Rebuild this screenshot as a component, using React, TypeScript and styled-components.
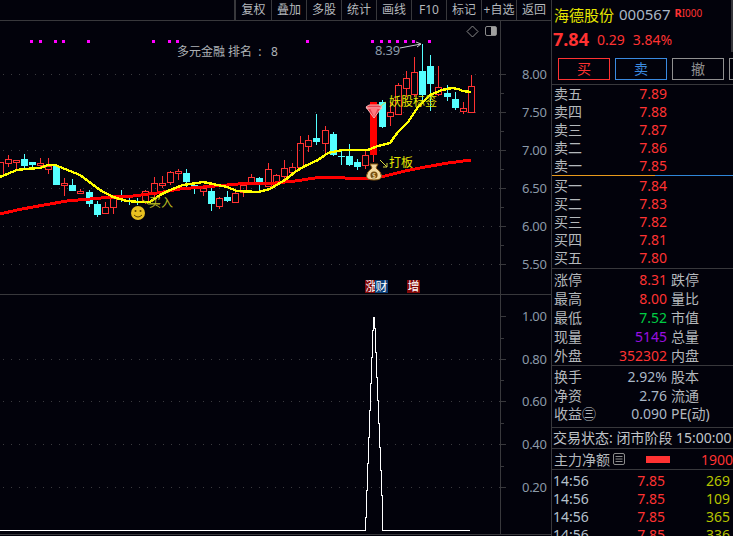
import React from "react";
import styled, { createGlobalStyle } from "styled-components";

const Global = createGlobalStyle`
  html, body { margin: 0; padding: 0; background: #02020b; }
  body { font-family: "Noto Sans", "Noto Sans CJK SC", sans-serif; }
`;

const FONT = `"Noto Sans", "Noto Sans CJK SC", sans-serif`;
const RED = "#ff3232";
const CYAN = "#54ffff";
const LINE = "#38383c";
const LABEL = "#b4b8bc";
const NUM = "#a9b7c6";

const Page = styled.div`
  width: 733px;
  height: 536px;
  overflow: hidden;
  display: flex;
  background: #02020b;
  font-family: ${FONT};
`;
const LeftColumn = styled.div`
  width: 551px;
  height: 536px;
  flex: none;
  display: flex;
  flex-direction: column;
`;
const TopBar = styled.div`
  height: 20px;
  flex: none;
  display: flex;
  justify-content: flex-end;
  border-bottom: 1px solid ${LINE};
`;
const TopButton = styled.div<{ $first?: boolean }>`
  width: ${(p) => (p.$first ? 37 : 35)}px;
  box-sizing: border-box;
  border-left: ${(p) => (p.$first ? 2 : 1)}px solid ${LINE};
  color: ${LABEL};
  font-size: 12px;
  line-height: 19px;
  text-align: center;
  white-space: nowrap;
`;
const ChartPanel = styled.div<{ $height: number }>`
  position: relative;
  height: ${(p) => p.$height}px;
  flex: none;
  border-bottom: 1px solid ${LINE};
  svg { display: block; }
`;
const ChartLabel = styled.span<{ $x: number; $y: number; $color: string }>`
  position: absolute;
  left: ${(p) => p.$x}px;
  top: ${(p) => p.$y}px;
  color: ${(p) => p.$color};
  font-size: 12px;
  line-height: 16px;
  white-space: pre;
`;
const NumberLabel = styled(ChartLabel)`
  font-size: 13px;
  letter-spacing: -0.2px;
`;
const Badge = styled.span<{ $x: number; $blue?: boolean }>`
  position: absolute;
  left: ${(p) => p.$x}px;
  top: 259px;
  width: 13px;
  height: 13px;
  background: ${(p) => (p.$blue ? "#0b3f78" : "#820808")};
  color: #fff;
  font-size: 12px;
  line-height: 13px;
  text-align: center;
`;
const CornerIcons = styled.svg`
  position: absolute;
  left: 466px;
  top: 4px;
`;
const ListIcon = styled.svg`
  margin-left: 3px;
  flex: none;
`;

const RightPanel = styled.div`
  position: relative;
  flex: 1;
  min-width: 0;
  height: 536px;
  overflow: hidden;
  border-left: 1px solid ${LINE};
  white-space: nowrap;
`;
const ScrollEdge = styled.div`
  position: absolute;
  right: 0;
  top: 0;
  width: 2px;
  height: 52px;
  background: #35353a;
`;
const TitleRow = styled.div`
  height: 28px;
  padding-left: 2px;
  display: flex;
  align-items: center;
  gap: 5px;
`;
const StockName = styled.span`
  color: #e6e600;
  font-size: 15px;
`;
const StockCode = styled.span`
  color: ${NUM};
  font-size: 15px;
`;
const Rights = styled.span`
  color: ${RED};
  font-size: 10px;
  margin: -4px 0 0 -1px;
  b { font-size: 11px; }
`;
const PriceRow = styled.div`
  height: 24px;
  padding-left: 1px;
  display: flex;
  align-items: center;
  gap: 8px;
  color: ${RED};
  font-size: 14px;
  margin-top: -1px;
  margin-bottom: 1px;
`;
const BigPrice = styled.span`
  font-size: 18px;
  font-weight: 700;
`;
const ButtonRow = styled.div`
  height: 33px;
  box-sizing: border-box;
  padding: 6px 0 0 6px;
  display: flex;
  gap: 5px;
  border-bottom: 1px solid ${LINE};
`;
const TradeButton = styled.div<{ $color: string }>`
  width: 52px;
  height: 22px;
  flex: none;
  box-sizing: border-box;
  border: 1px solid ${(p) => p.$color};
  color: ${(p) => p.$color};
  font-size: 14px;
  line-height: 19px;
  text-align: center;
`;
const BookSection = styled.div`
  padding: 0 0 0 2px;
`;
const SplitLine = styled.div`
  height: 1px;
  margin-bottom: 1px;
  background: linear-gradient(to right, #e89a1c 0 103px, #2f86d8 103px);
`;
const Section = styled.div<{ $top?: number; $bottom?: number }>`
  border-bottom: 1px solid ${LINE};
  padding: ${(p) => p.$top ?? 0}px 0 ${(p) => p.$bottom ?? 0}px 2px;
`;
const QuoteRow = styled.div<{ $h: number }>`
  height: ${(p) => p.$h}px;
  display: grid;
  grid-template-columns: 30px 83px auto;
  align-items: center;
  font-size: 14px;
  line-height: ${(p) => p.$h}px;
  color: ${LABEL};
`;
const Value = styled.span<{ $color?: string }>`
  color: ${(p) => p.$color ?? NUM};
  text-align: right;
`;
const SideLabel = styled.span`
  margin-left: 4px;
`;
const StatusRow = styled.div`
  height: 20px;
  margin-left: -1px;
  font-size: 14px;
  line-height: 20px;
  color: #c0c4c8;
`;
const FlowRow = styled.div`
  height: 20px;
  display: flex;
  align-items: center;
  font-size: 14px;
  color: ${LABEL};
`;
const FlowBar = styled.div`
  width: 24px;
  height: 7px;
  margin-left: 21px;
  background: ${RED};
`;
const FlowValue = styled.span`
  margin-left: 31px;
  color: ${RED};
`;
const TickList = styled.div`
  padding: 2px 0 0 1px;
`;
const TickRow = styled.div`
  height: 18px;
  display: grid;
  grid-template-columns: 36px 76px 65px;
  align-items: center;
  font-size: 14px;
  line-height: 18px;
`;
const TickTime = styled.span`
  color: #b4c0cc;
`;
const TickPrice = styled.span`
  color: ${RED};
  text-align: right;
`;
const TickVolume = styled.span`
  color: #b6c400;
  text-align: right;
`;

type Candle = [number, number, number, number, number, 0 | 1];
// x, high, body top, body bottom, low, 1 = rising (red hollow) / 0 = falling (cyan)
const candles: Candle[] = [
  [0, 162, 162, 176, 176, 1], [8, 155, 159, 163, 167, 1], [16, 160, 160, 162, 169, 1],
  [24, 154, 159, 166, 168, 0], [32, 162, 162, 165, 168, 0], [40, 158, 163, 165, 167, 1],
  [48, 158, 166, 169, 174, 1], [56, 165, 166, 185, 185, 0], [64, 178, 183, 185, 196, 1],
  [72, 179, 185, 191, 191, 0], [80, 189, 191, 193, 194, 1], [89, 190, 192, 204, 207, 0],
  [97, 201, 204, 215, 217, 0], [105, 202, 207, 213, 214, 1], [113, 196, 198, 207, 214, 1],
  [121, 190, 197, 198, 202, 0], [129, 198, 200, 202, 205, 0], [137, 198, 201, 202, 205, 0],
  [145, 190, 191, 201, 204, 1], [154, 177, 183, 192, 197, 1], [162, 176, 183, 185, 188, 1],
  [170, 171, 172, 182, 185, 1], [178, 169, 171, 173, 180, 1], [186, 169, 173, 182, 187, 0],
  [194, 182, 185, 189, 194, 0], [203, 186, 188, 191, 196, 1], [211, 187, 191, 204, 211, 0],
  [219, 197, 198, 206, 209, 1], [227, 191, 197, 201, 202, 0], [235, 192, 193, 202, 203, 1],
  [243, 183, 185, 192, 197, 1], [251, 174, 177, 182, 184, 1], [259, 177, 178, 182, 191, 0],
  [268, 163, 169, 186, 187, 1], [276, 174, 175, 183, 185, 1], [284, 160, 168, 176, 180, 1],
  [292, 163, 167, 172, 175, 1], [300, 136, 143, 167, 169, 1], [308, 135, 140, 146, 152, 1],
  [316, 114, 138, 142, 145, 0], [325, 126, 130, 143, 153, 1], [333, 132, 134, 155, 156, 0],
  [341, 151, 156, 156, 165, 0], [349, 144, 156, 165, 166, 0], [357, 159, 162, 167, 170, 0],
  [365, 150, 155, 165, 169, 1], [382, 100, 102, 127, 128, 0], [390, 102, 112, 116, 126, 1],
  [398, 83, 85, 114, 115, 1], [406, 71, 78, 88, 97, 1], [414, 57, 72, 94, 97, 1],
  [422, 44, 71, 95, 103, 0], [430, 55, 66, 84, 111, 0], [438, 66, 87, 94, 96, 1],
  [447, 85, 93, 97, 101, 0], [455, 92, 99, 108, 110, 0], [463, 102, 108, 111, 114, 1],
  [471, 75, 86, 112, 112, 1],
];

const yellowLine =
  "0,177 7,174 17,170 25,169 40,168 48,165 55,165 65,169 80,175 88,181 100,190 113,197 127,201 140,202 150,202 160,195 170,190 183,185 197,183 203,182 213,184 227,187 237,191 258,192 270,189 280,183 285,180 295,172 305,166 318,160 328,153 342,150 355,150 368,150 378,146 390,143 398,132 408,122 418,107 430,95 442,90 452,88 458,89 463,91 471,92";
const redLine =
  "0,214 17,210 33,207 50,204 67,201 90,199 113,197 133,196 157,193 180,189 203,187 227,185 250,183 275,183 295,181 315,178 332,177 345,178 372,178 385,176 405,171 425,167 448,163 471,160";

const dots = [31, 40, 55, 63, 88, 153, 169, 177, 307, 372, 381, 389, 397, 405, 413, 429];
const grid = [74, 112, 150, 188, 226, 264];
const gridLabels = ["8.00", "7.50", "7.00", "6.50", "6.00", "5.50"];
const lowerGrid = [359, 401, 444, 487];
const lowerLabels = [
  [316, "1.00"], [359, "0.80"], [401, "0.60"], [444, "0.40"], [487, "0.20"],
] as const;
const peak =
  "0,530 365,530 365,517 366,517 366,490 367,490 367,463 368,463 368,437 369,437 369,410 370,410 370,383 371,383 371,357 372,357 372,330 373,330 373,317 374,317 374,328 375,328 375,352 376,352 376,377 377,377 377,400 378,400 378,423 379,423 379,447 380,447 380,470 381,470 381,495 382,495 382,530 470,530";

const AxisText = styled.text`
  fill: #8b99a8;
  font-family: ${FONT};
  font-size: 13px;
  letter-spacing: -0.3px;
`;

const Smiley = () => (
  <g>
    <circle cx={138} cy={213} r={7} fill="#e8c020" />
    <circle cx={135.5} cy={211} r={1} fill="#5a4000" />
    <circle cx={140.5} cy={211} r={1} fill="#5a4000" />
    <path d="M134 215 Q138 219 142 215" fill="none" stroke="#5a4000" strokeWidth={1} />
  </g>
);

const MoneyBag = () => (
  <g>
    <path d="M370 164 L378 164 L376 168 Q381.5 172 381.5 176 Q381.5 180 374 180 Q366.5 180 366.5 176 Q366.5 172 372 168 Z" fill="#f2d9a0" stroke="#8a5a10" strokeWidth={1} />
    <circle cx={374} cy={175} r={3.6} fill="#7a5010" />
    <text x={372} y={178} fontSize={7} fill="#f7e4b0" fontFamily={FONT}>$</text>
  </g>
);

const Gem = () => (
  <g>
    <path d="M366 107 L369 105 L379 105 L382 107 L374 118 Z" fill="#e8434f" stroke="#f6b0b0" strokeWidth={1} />
    <path d="M366 108 L382 108" stroke="#ffd0d0" strokeWidth={1} />
    <path d="M370 108 L374 117 L378 108" fill="#ff7a80" />
  </g>
);

const PriceChartDrawing = () => (
  <svg width={551} height={274} viewBox="0 21 551 274" shapeRendering="crispEdges">
    {grid.map((y) => (
      <line key={y} x1={3} x2={500} y1={y + 0.5} y2={y + 0.5} stroke="#3a3a3e" strokeDasharray="1 7" />
    ))}
    <line x1={500.5} x2={500.5} y1={21} y2={295} stroke={LINE} />
    {grid.map((y) => (
      <line key={y} x1={501} x2={506} y1={y + 0.5} y2={y + 0.5} stroke={LINE} />
    ))}
    {grid.slice(0, 5).map((y) => (
      <line key={y} x1={501} x2={504} y1={y + 19.5} y2={y + 19.5} stroke={LINE} />
    ))}
    {grid.map((y, i) => (
      <AxisText key={y} x={522} y={y + 5}>{gridLabels[i]}</AxisText>
    ))}
    {dots.map((x) => (
      <rect key={x} x={x - 1} y={40} width={3} height={3} fill="#ff00ff" />
    ))}
    {candles.map(([x, high, top, bottom, low, up]) => {
      const color = up ? RED : CYAN;
      return (
        <g key={x}>
          <line x1={x + 0.5} x2={x + 0.5} y1={high} y2={top} stroke={color} />
          <line x1={x + 0.5} x2={x + 0.5} y1={bottom} y2={low} stroke={color} />
          {up ? (
            <rect x={x - 2.5} y={top + 0.5} width={6} height={Math.max(bottom - top, 1)} fill="none" stroke={color} />
          ) : (
            <rect x={x - 3} y={top} width={7} height={Math.max(bottom - top, 1)} fill={color} />
          )}
        </g>
      );
    })}
    <rect x={370} y={102} width={7} height={53} fill="#ff0000" />
    <line x1={373.5} x2={373.5} y1={155} y2={162} stroke={RED} />
    <polyline points={redLine} fill="none" stroke="#ff0000" strokeWidth={3} />
    <polyline points={yellowLine} fill="none" stroke="#ffff00" strokeWidth={2.4} />
    <g shapeRendering="auto">
      <path d="M400 48 L421 44 M416 42 L421 44 L417 47" fill="none" stroke="#c8ccd0" strokeWidth={1} />
      <path d="M380 160 L387 167 M387 163 L387 167 L383 167" fill="none" stroke="#d8d840" strokeWidth={1} />
      <path d="M386 102 L378 108 M378 104 L378 108 L382 108" fill="none" stroke="#d8d840" strokeWidth={1} />
      <path d="M143 200 L148 204 L160 204" fill="none" stroke="#c8c820" strokeWidth={1} />
      <Smiley />
      <MoneyBag />
      <Gem />
    </g>
  </svg>
);

const IndicatorDrawing = () => (
  <svg width={551} height={239} viewBox="0 295 551 239" shapeRendering="crispEdges">
    {lowerGrid.map((y) => (
      <line key={y} x1={3} x2={500} y1={y + 0.5} y2={y + 0.5} stroke="#3a3a3e" strokeDasharray="1 7" />
    ))}
    <line x1={500.5} x2={500.5} y1={295} y2={536} stroke={LINE} />
    {lowerLabels.map(([y]) => (
      <line key={y} x1={501} x2={506} y1={y + 0.5} y2={y + 0.5} stroke={LINE} />
    ))}
    {[338, 380, 423, 466].map((y) => (
      <line key={y} x1={501} x2={504} y1={y + 0.5} y2={y + 0.5} stroke={LINE} />
    ))}
    {lowerLabels.map(([y, text]) => (
      <AxisText key={y} x={522} y={y + 5}>{text}</AxisText>
    ))}
    <polyline points={peak} fill="none" stroke="#ffffff" strokeWidth={1} />
  </svg>
);

const ask = [["卖五", "7.89"], ["卖四", "7.88"], ["卖三", "7.87"], ["卖二", "7.86"], ["卖一", "7.85"]];
const bid = [["买一", "7.84"], ["买二", "7.83"], ["买三", "7.82"], ["买四", "7.81"], ["买五", "7.80"]];
const stats: [string, string, string, string][] = [
  ["涨停", "8.31", RED, "跌停"],
  ["最高", "8.00", RED, "量比"],
  ["最低", "7.52", "#00cc44", "市值"],
  ["现量", "5145", "#9a10e0", "总量"],
  ["外盘", "352302", RED, "内盘"],
];
const ratios = [["换手", "2.92%", "股本"], ["净资", "2.76", "流通"], ["收益㊂", "0.090", "PE(动)"]];
const ticks = ["269", "109", "365", "336"];
const topButtons = ["复权", "叠加", "多股", "统计", "画线", "F10", "标记", "+自选", "返回"];

export default function App() {
  return (
    <Page>
      <Global />
      <LeftColumn>
        <TopBar>
          {topButtons.map((t, i) => (
            <TopButton key={t} $first={i === 0}>{t}</TopButton>
          ))}
        </TopBar>
        <ChartPanel $height={273}>
          <PriceChartDrawing />
          <CornerIcons width={34} height={13} viewBox="0 0 34 13">
            <path d="M6.5 1 L12 6.5 L6.5 12 L1 6.5 Z" fill="none" stroke="#8a8a8a" />
            <rect x={19.5} y={1.5} width={11} height={9} rx={1.5} fill="none" stroke="#8a8a8a" />
            <rect x={25} y={2} width={5} height={8} fill="#a0a0a0" />
          </CornerIcons>
          <ChartLabel $x={177} $y={23} $color="#aeb2b6">多元金融 排名  :   8</ChartLabel>
          <NumberLabel $x={375} $y={21} $color="#8b99a8">8.39</NumberLabel>
          <ChartLabel $x={389} $y={73} $color="#e6e600">妖股标签</ChartLabel>
          <ChartLabel $x={389} $y={134} $color="#e6e600">打板</ChartLabel>
          <ChartLabel $x={149} $y={174} $color="#b8b820">买入</ChartLabel>
          <Badge $x={365}>涨</Badge>
          <Badge $x={375} $blue>财</Badge>
          <Badge $x={407}>增</Badge>
        </ChartPanel>
        <ChartPanel $height={239}>
          <IndicatorDrawing />
        </ChartPanel>
      </LeftColumn>
      <RightPanel>
        <ScrollEdge />
        <TitleRow>
          <StockName>海德股份</StockName>
          <StockCode>000567</StockCode>
          <Rights><b>R</b>I000</Rights>
        </TitleRow>
        <PriceRow>
          <BigPrice>7.84</BigPrice>
          <span>0.29</span>
          <span>3.84%</span>
        </PriceRow>
        <ButtonRow>
          <TradeButton $color={RED}>买</TradeButton>
          <TradeButton $color="#3a8ae0">卖</TradeButton>
          <TradeButton $color="#909090">撤</TradeButton>
          <TradeButton $color="#909090" />
        </ButtonRow>
        <BookSection>
          {ask.map(([l, v]) => (
            <QuoteRow key={l} $h={18}>
              <span>{l}</span>
              <Value $color={RED}>{v}</Value>
            </QuoteRow>
          ))}
        </BookSection>
        <SplitLine />
        <Section $bottom={1}>
          {bid.map(([l, v]) => (
            <QuoteRow key={l} $h={18}>
              <span>{l}</span>
              <Value $color={RED}>{v}</Value>
            </QuoteRow>
          ))}
        </Section>
        <Section $top={1}>
          {stats.map(([l, v, c, s]) => (
            <QuoteRow key={l} $h={19}>
              <span>{l}</span>
              <Value $color={c}>{v}</Value>
              <SideLabel>{s}</SideLabel>
            </QuoteRow>
          ))}
        </Section>
        <Section $top={2} $bottom={3.5}>
          {ratios.map(([l, v, s]) => (
            <QuoteRow key={l} $h={18.5}>
              <span>{l}</span>
              <Value>{v}</Value>
              <SideLabel>{s}</SideLabel>
            </QuoteRow>
          ))}
        </Section>
        <Section>
          <StatusRow>交易状态: 闭市阶段 15:00:00</StatusRow>
        </Section>
        <Section>
          <FlowRow>
            主力净额
            <ListIcon width={12} height={12} viewBox="0 0 12 12">
              <rect x={0.5} y={0.5} width={11} height={11} rx={1.5} fill="none" stroke="#8a8a8a" />
              <path d="M2.5 3.5H9.5M2.5 6H9.5M2.5 8.5H9.5" stroke="#8a8a8a" />
            </ListIcon>
            <FlowBar />
            <FlowValue>1900</FlowValue>
          </FlowRow>
        </Section>
        <TickList>
          {ticks.map((v, i) => (
            <TickRow key={i}>
              <TickTime>14:56</TickTime>
              <TickPrice>7.85</TickPrice>
              <TickVolume>{v}</TickVolume>
            </TickRow>
          ))}
        </TickList>
      </RightPanel>
    </Page>
  );
}
